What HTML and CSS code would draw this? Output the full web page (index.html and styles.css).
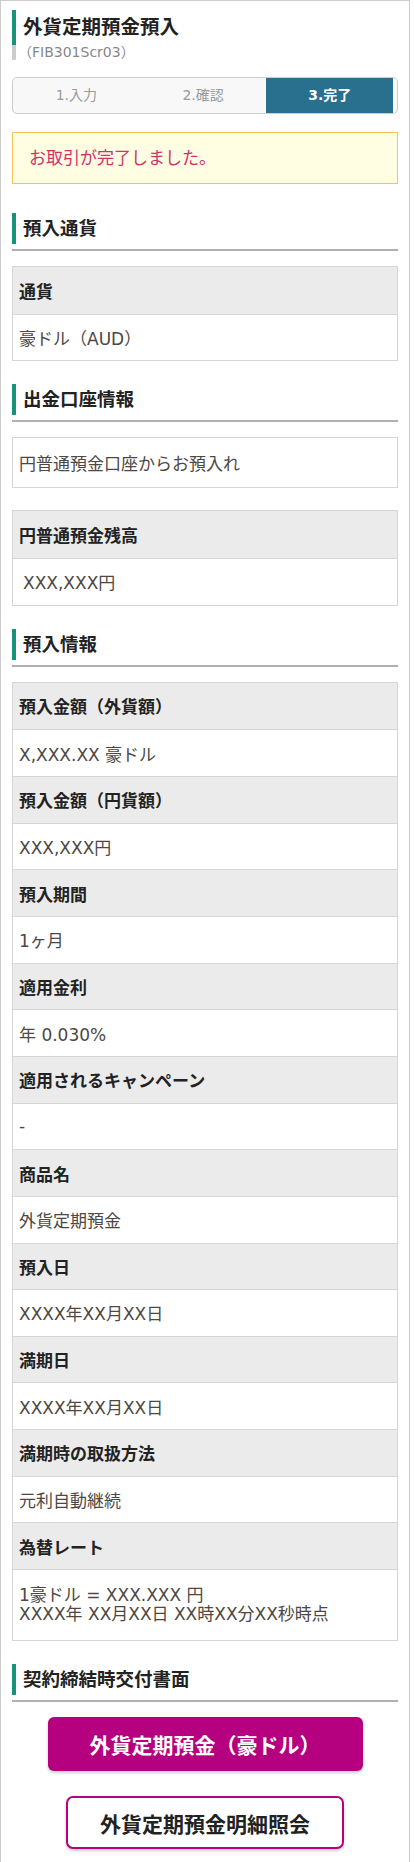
FILE: index.html
```html
<!DOCTYPE html>
<html lang="ja">
<head>
  <meta charset="utf-8">
  <title>外貨定期預金預入</title>
  <link rel="stylesheet" href="styles.css">
</head>
<body>
  <div class="page">
    <div class="page-title">
      <h1>外貨定期預金預入</h1>
      <p class="screen-id">（FIB301Scr03）</p>
    </div>

    <ol class="steps">
      <li>1.入力</li>
      <li>2.確認</li>
      <li class="current">3.完了</li>
    </ol>

    <div class="notice">お取引が完了しました。</div>

    <h2 class="section-title">預入通貨</h2>
    <dl class="info">
      <dt>通貨</dt>
      <dd>豪ドル（AUD）</dd>
    </dl>

    <h2 class="section-title">出金口座情報</h2>
    <dl class="info">
      <dd class="account">円普通預金口座からお預入れ</dd>
    </dl>
    <dl class="info">
      <dt>円普通預金残高</dt>
      <dd class="indent">XXX,XXX円</dd>
    </dl>

    <h2 class="section-title">預入情報</h2>
    <dl class="info">
      <dt>預入金額（外貨額）</dt>
      <dd>X,XXX.XX 豪ドル</dd>
      <dt>預入金額（円貨額）</dt>
      <dd>XXX,XXX円</dd>
      <dt>預入期間</dt>
      <dd>1ヶ月</dd>
      <dt>適用金利</dt>
      <dd>年 0.030%</dd>
      <dt>適用されるキャンペーン</dt>
      <dd>-</dd>
      <dt>商品名</dt>
      <dd>外貨定期預金</dd>
      <dt>預入日</dt>
      <dd>XXXX年XX月XX日</dd>
      <dt>満期日</dt>
      <dd>XXXX年XX月XX日</dd>
      <dt>満期時の取扱方法</dt>
      <dd>元利自動継続</dd>
      <dt>為替レート</dt>
      <dd class="multi">
        <span>1豪ドル = XXX.XXX 円</span>
        <span>XXXX年 XX月XX日 XX時XX分XX秒時点</span>
      </dd>
    </dl>

    <h2 class="section-title">契約締結時交付書面</h2>
    <div class="buttons">
      <a class="btn btn-primary" href="#">外貨定期預金（豪ドル）</a>
      <a class="btn btn-secondary" href="#">外貨定期預金明細照会</a>
    </div>
  </div>
</body>
</html>
```

FILE: styles.css
```css
body {
  margin: 0;
  font-family: "DejaVu Sans", "Noto Sans CJK JP", sans-serif;
  color: #222;
  background: #fff;
}

.page {
  width: 410px;
  min-height: 1860px;
  box-sizing: border-box;
  border: 1px solid #ccc;
  padding: 9px 11px 15px 11px;
}

/* title */
.page-title h1 {
  margin: 0;
  border-left: 4px solid #17937a;
  padding-left: 7px;
  font-size: 19.5px;
  line-height: 35px;
  font-weight: bold;
}

.screen-id {
  margin: 0;
  border-left: 4px solid #ccc;
  padding-left: 2px;
  font-size: 14px;
  line-height: 15px;
  color: #888;
}

/* steps */
.steps {
  display: flex;
  list-style: none;
  margin: 17px 0 0;
  padding: 0;
  height: 37px;
  box-sizing: border-box;
  border: 1px solid #ccc;
  border-radius: 5px;
  background: #f8f8f8;
  overflow: hidden;
}

.steps li {
  width: 33%;
  text-align: center;
  line-height: 35px;
  font-size: 14px;
  color: #9a9a9a;
}

.steps li.current {
  background: #29708f;
  color: #fff;
  font-weight: bold;
}

/* notice */
.notice {
  margin: 18px 0 29px;
  height: 52px;
  box-sizing: border-box;
  border: 1px solid #f2c55c;
  background: #fffde2;
  color: #d0306b;
  font-size: 17px;
  line-height: 50px;
  padding: 0 16px;
}

/* section heading */
.section-title {
  margin: 23px 0 15px;
  padding: 0 0 5px 11px;
  font-size: 18.5px;
  line-height: 31px;
  font-weight: bold;
  border-bottom: 2px solid #b0b0b0;
  background: linear-gradient(#17937a, #17937a) left top / 4px 31px no-repeat;
}

/* info tables */
.info {
  margin: 0;
  border: 1px solid #d6d6d6;
}

.info + .info {
  margin-top: 22px;
}

.info dt,
.info dd {
  margin: 0;
  height: 46.67px;
  box-sizing: border-box;
  display: flex;
  align-items: center;
  padding: 0 6px;
  font-size: 17px;
  border-top: 1px solid #d6d6d6;
}

.info > :first-child {
  border-top: none;
}

.info dt {
  background: #ebebeb;
  font-weight: bold;
  color: #222;
}

.info dd {
  background: #fff;
  color: #4d4843;
}

.info dd.account {
  height: 49px;
}

.info dd.indent {
  padding-left: 10px;
}

.info dd.multi {
  flex-direction: column;
  align-items: flex-start;
  justify-content: center;
  height: 71px;
}

.info dd.multi span {
  line-height: 19px;
}

/* buttons */
.buttons {
  display: flex;
  flex-direction: column;
  align-items: center;
  gap: 25px;
}

.btn {
  display: flex;
  align-items: center;
  justify-content: center;
  box-sizing: border-box;
  text-decoration: none;
  font-size: 21px;
  font-weight: bold;
  box-shadow: 0 2px 3px rgba(0, 0, 0, 0.2);
}

.btn-primary {
  width: 315px;
  height: 54px;
  background: #b5007f;
  color: #fff;
  border-radius: 6px;
}

.btn-secondary {
  width: 278px;
  height: 53px;
  background: #fff;
  color: #222;
  border: 2px solid #b5007f;
  border-radius: 7px;
}
```
